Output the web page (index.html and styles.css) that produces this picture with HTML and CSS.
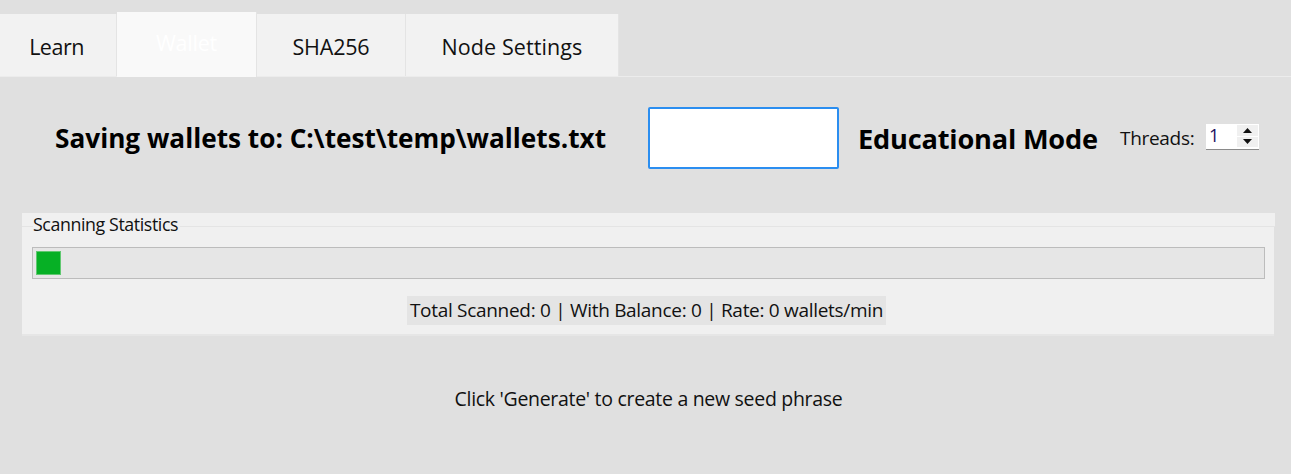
FILE: index.html
```html
<!DOCTYPE html>
<html>
<head>
<meta charset="utf-8">
<link rel="stylesheet" href="styles.css">
</head>
<body>
<div class="app">
  <div class="tabbar">
    <div class="tab tab-learn">Learn</div>
    <div class="tab tab-active tab-wallet">Wallet</div>
    <div class="tab tab-sha">SHA256</div>
    <div class="tab tab-node">Node Settings</div>
  </div>
  <div class="pane">
    <div class="toprow">
      <div class="saving">Saving wallets to: C:\test\temp\wallets.txt</div>
      <button class="gen-btn">Generate New</button>
      <div class="edu">Educational Mode</div>
      <div class="threads">
        <span class="threads-label">Threads:</span>
        <div class="spin">
          <span class="spin-val">1</span>
          <div class="spin-btns">
            <div class="spin-btn"><svg width="9" height="5" viewBox="0 0 9 5"><polygon points="0,5 9,5 4.5,0" fill="#111"/></svg></div>
            <div class="spin-btn"><svg width="9" height="5" viewBox="0 0 9 5"><polygon points="0,0 9,0 4.5,5" fill="#111"/></svg></div>
          </div>
        </div>
      </div>
    </div>
    <div class="group">
      <div class="group-title-strip"><span class="group-title">Scanning Statistics</span></div>
      <div class="group-body">
        <div class="progress"><div class="chunk"></div></div>
        <div class="stats-row"><span class="stats">Total Scanned: 0 | With Balance: 0 | Rate: 0 wallets/min</span></div>
      </div>
    </div>
    <div class="hint">Click 'Generate' to create a new seed phrase</div>
  </div>
</div>
</body>
</html>
```

FILE: styles.css
```css
* { box-sizing: border-box; }
html, body {
  margin: 0;
  padding: 0;
  background: #e0e0e0;
  width: 1291px;
  height: 474px;
  overflow: hidden;
  font-family: "Open Sans", "Noto Sans", sans-serif;
  color: #000;
}
.app { width: 1291px; height: 474px; }
.tabbar {
  display: flex;
  align-items: flex-end;
  height: 77px;
  padding-top: 12px;
  border-bottom: 1px solid #ececec;
}
.tab {
  height: 62px;
  background: #f2f2f2;
  display: flex;
  align-items: center;
  justify-content: center;
  font-size: 21.5px;
  letter-spacing: -0.2px;
  color: #111;
  border-right: 1px solid #e4e4e4;
  padding-top: 3px;
}
.tab-learn { width: 117px; padding-right: 3px; letter-spacing: -0.5px; }
.tab-wallet { width: 140px; }
.tab-sha { width: 149px; }
.tab-node { width: 213px; letter-spacing: 0.1px; }
.tab-active {
  height: 65px;
  background: #f9f9f9;
  color: #ffffff;
  margin-bottom: -1px;
  padding-top: 0;
  padding-bottom: 4px;
}
.toprow {
  display: flex;
  align-items: center;
  height: 92px;
  margin-top: 15px;
  margin-bottom: 29px;
}
.saving {
  margin-left: 55px;
  width: 593px;
  font-weight: 700;
  font-size: 26.2px;
}
.gen-btn {
  width: 191px;
  height: 62px;
  background: #fff;
  border: 2px solid #2b8ef0;
  border-radius: 2px;
  color: #fff;
  font-family: inherit;
  font-size: 17px;
  padding: 0;
}
.edu {
  margin-left: 19px;
  font-weight: 700;
  font-size: 27.2px;
  letter-spacing: -0.2px;
  width: 262px;
}
.threads {
  display: flex;
  align-items: center;
}
.threads-label {
  font-size: 19px;
  letter-spacing: -0.3px;
  color: #111;
  width: 86px;
}
.spin {
  width: 53px;
  height: 26px;
  background: #fff;
  border-bottom: 1px solid #8a8a8a;
  display: flex;
  align-items: stretch;
  margin-top: -2px;
}
.spin-val {
  flex: 1;
  font-size: 18px;
  line-height: 22px;
  padding-left: 3px;
  color: #201060;
}
.spin-btns {
  width: 22px;
  display: flex;
  flex-direction: column;
  gap: 1px;
  padding: 1px 1px 2px 0;
}
.spin-btn {
  flex: 1;
  background: #f0f0f0;
  display: flex;
  align-items: center;
  justify-content: center;
}
.group {
  margin: 0 16px 0 22px;
  height: 123px;
  display: flex;
  flex-direction: column;
}
.group-title-strip {
  height: 14px;
  background: #f0f0f0;
  border-bottom: 1px solid #e4e4e4;
  position: relative;
}
.group-title {
  position: absolute;
  left: 11px;
  top: 1px;
  font-size: 17.8px;
  letter-spacing: -0.4px;
  color: #111;
  line-height: 20px;
  background: #f0f0f0;
  padding-right: 2px;
}
.group-body {
  flex: 1;
  background: #f0f0f0;
  border-bottom: 2px solid #e6e6e6;
  margin-right: 1px;
  padding: 20px 9px 0 10px;
}
.progress {
  height: 32px;
  background: #e6e6e6;
  border: 1px solid #bcbcbc;
  padding: 3px;
}
.chunk {
  width: 25px;
  height: 24px;
  background: #06b025;
  border: 1px solid #60c870;
}
.stats-row {
  display: flex;
  justify-content: center;
  margin-top: 17px;
  margin-left: -4px;
}
.stats {
  background: #e4e4e4;
  font-size: 19px;
  letter-spacing: -0.3px;
  line-height: 29px;
  padding: 0 3px;
  color: #111;
}
.hint {
  text-align: center;
  font-size: 19.5px;
  letter-spacing: -0.3px;
  margin-top: 49px;
  margin-left: 6px;
  color: #111;
}
```
